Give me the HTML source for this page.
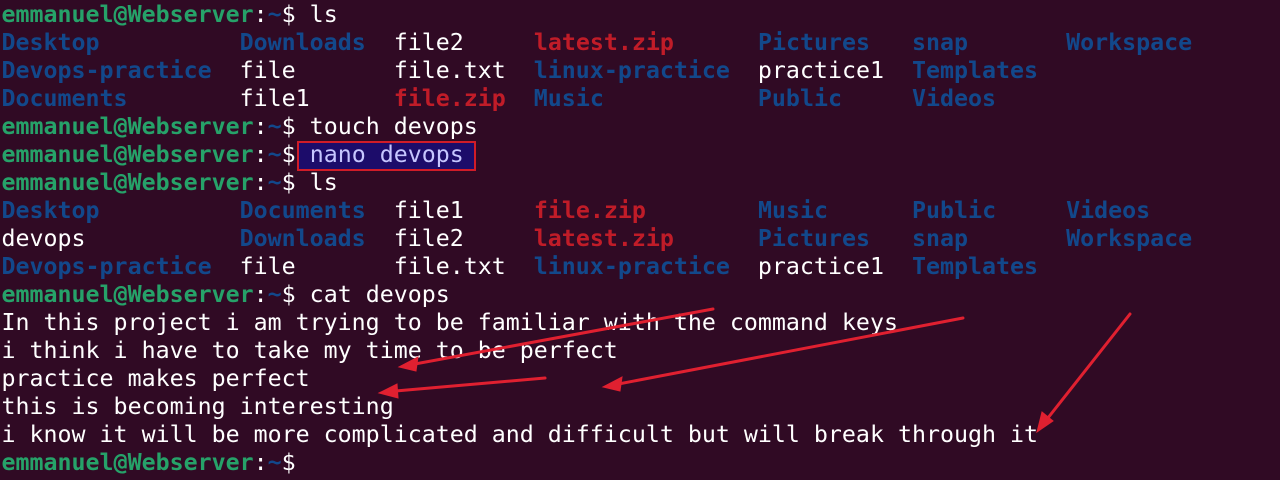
<!DOCTYPE html>
<html><head><meta charset="utf-8"><style>
body{margin:0;width:1280px;height:480px;background:#300a24;overflow:hidden;position:relative}
pre{margin:0;position:absolute;left:1.5px;top:1px;font-family:"DejaVu Sans Mono","Liberation Mono",monospace;font-size:23.27px;line-height:28px;color:#fff;z-index:2}
.g{color:#26a269;font-weight:bold}.b{color:#12488b;font-weight:bold}.r{color:#c01c28;font-weight:bold}
.hl{color:#c6c6ff}
.box{position:absolute;left:297px;top:141px;width:175px;height:26px;background:#1c0c6a;border:2px solid #d01c28;z-index:1}
svg{position:absolute;left:0;top:0;z-index:3}
</style></head><body>
<div class="box"></div>
<pre><span class="g">emmanuel@Webserver</span>:<span class="b">~</span>$ ls
<span class="b">Desktop</span>          <span class="b">Downloads</span>  file2     <span class="r">latest.zip</span>      <span class="b">Pictures</span>   <span class="b">snap</span>       <span class="b">Workspace</span>
<span class="b">Devops-practice</span>  file       file.txt  <span class="b">linux-practice</span>  practice1  <span class="b">Templates</span>
<span class="b">Documents</span>        file1      <span class="r">file.zip</span>  <span class="b">Music</span>           <span class="b">Public</span>     <span class="b">Videos</span>
<span class="g">emmanuel@Webserver</span>:<span class="b">~</span>$ touch devops
<span class="g">emmanuel@Webserver</span>:<span class="b">~</span>$ <span class="hl">nano devops</span>
<span class="g">emmanuel@Webserver</span>:<span class="b">~</span>$ ls
<span class="b">Desktop</span>          <span class="b">Documents</span>  file1     <span class="r">file.zip</span>        <span class="b">Music</span>      <span class="b">Public</span>     <span class="b">Videos</span>
devops           <span class="b">Downloads</span>  file2     <span class="r">latest.zip</span>      <span class="b">Pictures</span>   <span class="b">snap</span>       <span class="b">Workspace</span>
<span class="b">Devops-practice</span>  file       file.txt  <span class="b">linux-practice</span>  practice1  <span class="b">Templates</span>
<span class="g">emmanuel@Webserver</span>:<span class="b">~</span>$ cat devops
In this project i am trying to be familiar with the command keys
i think i have to take my time to be perfect
practice makes perfect
this is becoming interesting
i know it will be more complicated and difficult but will break through it
<span class="g">emmanuel@Webserver</span>:<span class="b">~</span>$</pre>
<svg width="1280" height="480">
<g stroke="#e02030" stroke-width="3" fill="#e02030" stroke-linecap="round">
<line x1="713" y1="309" x2="404" y2="366"/><polygon points="399,367 418,357 416,371" stroke-width="1"/>
<line x1="963" y1="318" x2="608" y2="386"/><polygon points="603,387 622,377 620,391" stroke-width="1"/>
<line x1="545" y1="378" x2="384" y2="392"/><polygon points="379,393 397,384 398,398" stroke-width="1"/>
<line x1="1130" y1="314" x2="1040" y2="428"/><polygon points="1037,432 1042,412 1053,421" stroke-width="1"/>
</g></svg>
</body></html>
